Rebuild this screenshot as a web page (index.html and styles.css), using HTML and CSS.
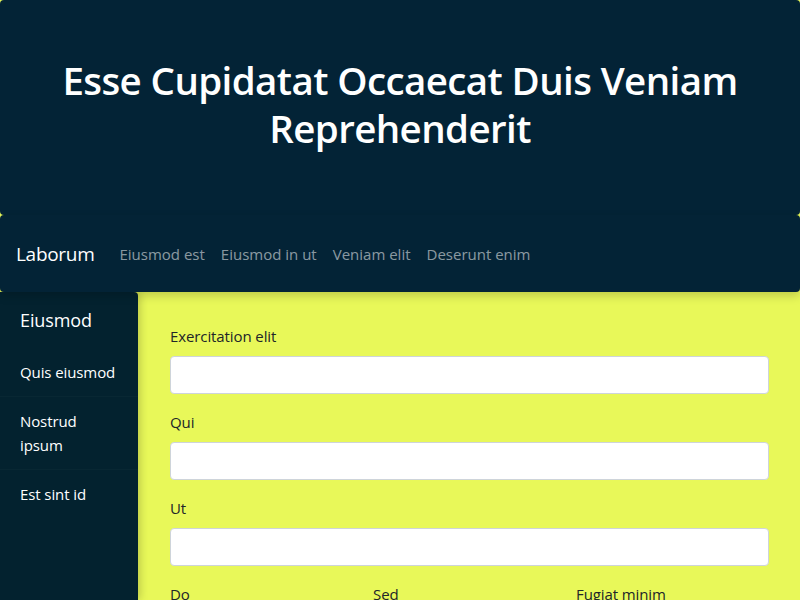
FILE: index.html
```html
<!DOCTYPE html>
<html lang="en">
<head>
<meta charset="utf-8">
<title>Esse Cupidatat</title>
<link rel="stylesheet" href="styles.css">
</head>
<body>
<header class="hero">
  <h1 class="hero-title">Esse Cupidatat Occaecat Duis Veniam Reprehenderit</h1>
</header>
<nav class="topnav">
  <span class="brand">Laborum</span>
  <a class="nav-link" href="#">Eiusmod est</a>
  <a class="nav-link" href="#">Eiusmod in ut</a>
  <a class="nav-link" href="#">Veniam elit</a>
  <a class="nav-link" href="#">Deserunt enim</a>
</nav>
<div class="layout">
  <aside class="sidebar">
    <h2 class="side-title">Eiusmod</h2>
    <a class="side-item" href="#">Quis eiusmod</a>
    <a class="side-item" href="#">Nostrud ipsum</a>
    <a class="side-item" href="#">Est sint id</a>
  </aside>
  <main class="content">
    <div class="field">
      <label class="label">Exercitation elit</label>
      <input class="input" type="text">
    </div>
    <div class="field">
      <label class="label">Qui</label>
      <input class="input" type="text">
    </div>
    <div class="field">
      <label class="label">Ut</label>
      <input class="input" type="text">
    </div>
    <div class="row">
      <div class="field"><label class="label">Do</label><input class="input" type="text"></div>
      <div class="field"><label class="label">Sed</label><input class="input" type="text"></div>
      <div class="field"><label class="label">Fugiat minim</label><input class="input" type="text"></div>
    </div>
  </main>
</div>
</body>
</html>
```
FILE: styles.css
```css
* { box-sizing: border-box; }
html, body { height: 100%; }
body {
  margin: 0;
  background: #e8f859;
  font-family: "Open Sans", "Noto Sans", sans-serif;
  font-size: 16px;
  line-height: 24px;
  color: #212529;
  overflow: hidden;
}
.hero {
  background: #032336;
  border-radius: 4px;
  height: 215px;
  padding-top: 56px;
  text-align: center;
}
.hero-title {
  margin: 0;
  color: #ffffff;
  font-size: 38.5px;
  font-weight: 600;
  line-height: 48px;
  letter-spacing: -0.6px;
}
.topnav {
  position: relative;
  z-index: 2;
  background: #032336;
  border-radius: 4px;
  height: 77px;
  padding: 0 16px;
  display: flex;
  align-items: center;
  box-shadow: 0 4px 10px rgba(0,0,0,0.18);
}
.brand {
  color: #ffffff;
  font-size: 19px;
  line-height: 30px;
  margin-right: 17px;
  letter-spacing: -0.3px;
}
.nav-link {
  color: rgba(255,255,255,0.55);
  text-decoration: none;
  padding: 0 8px;
  font-size: 15px;
}
.layout {
  display: flex;
  height: 308px;
}
.sidebar {
  position: relative;
  z-index: 1;
  width: 138px;
  flex: none;
  background: #03222f;
  border-top-right-radius: 4px;
  padding-top: 16px;
  box-shadow: 2px 0 8px rgba(0,0,0,0.2);
  display: flex;
  flex-direction: column;
}
.side-title {
  margin: 0 0 16px;
  padding: 0 20px;
  color: #ffffff;
  font-size: 18px;
  font-weight: 400;
  line-height: 24px;
  letter-spacing: -0.1px;
}
.side-item {
  display: block;
  color: #ffffff;
  text-decoration: none;
  padding: 12px 20px;
  font-size: 15px;
  letter-spacing: -0.1px;
  border-bottom: 1px solid rgba(255,255,255,0.025);
}
.side-item:last-child { border-bottom: none; }
.content {
  flex: 1;
  padding: 32px 31px 0 32px;
}
.field {
  display: flex;
  flex-direction: column;
  margin-bottom: 16px;
}
.label {
  margin-bottom: 8px;
  font-size: 15px;
  letter-spacing: -0.1px;
}
.input {
  height: 38px;
  border: 1px solid #ced4da;
  border-radius: 4px;
  background: #ffffff;
  font: inherit;
  padding: 6px 12px;
  width: 100%;
}
.row {
  display: grid;
  grid-template-columns: repeat(3, 1fr);
  gap: 10px;
}
```
